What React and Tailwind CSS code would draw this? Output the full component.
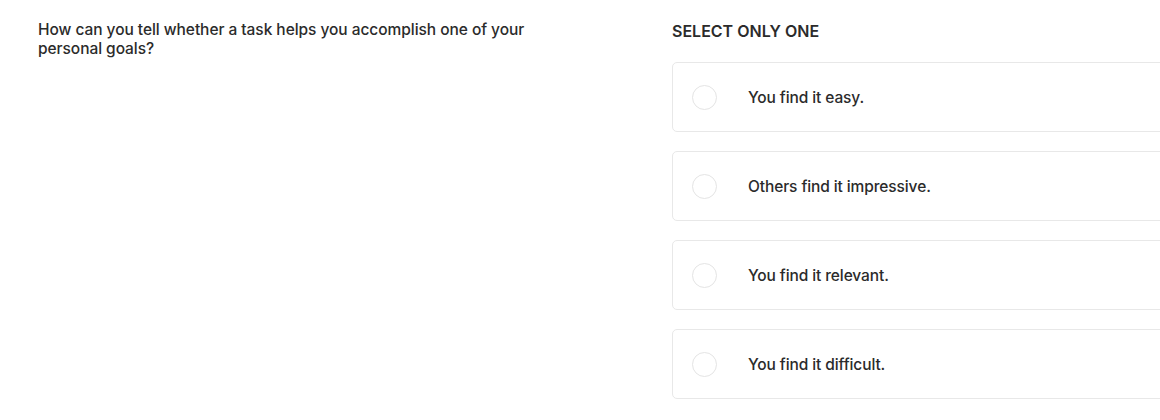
export default function App() {
  const options = [
    "You find it easy.",
    "Others find it impressive.",
    "You find it relevant.",
    "You find it difficult.",
  ];
  return (
    <div
      className="w-[1160px] h-[420px] overflow-hidden bg-white flex text-[#2b2b2b]"
      style={{ fontFamily: "Inter, 'Noto Sans', sans-serif" }}
    >
      <div className="w-[672px] shrink-0 pl-[38px] pt-[20px] pr-[124px]">
        <p className="text-[15.5px] leading-[19px] font-medium tracking-[-0.05px]">
          How can you tell whether a task helps you accomplish one of your personal goals?
        </p>
      </div>
      <div className="w-[560px] shrink-0 pt-[20px]">
        <div className="text-[16px] leading-[22px] font-semibold">SELECT ONLY ONE</div>
        <div className="mt-[20px] flex flex-col gap-[19px]">
          {options.map((o) => (
            <div
              key={o}
              className="h-[70px] border border-[#e8e8e8] rounded-[5px] flex items-center pl-[19px]"
            >
              <div className="w-[25px] h-[25px] rounded-full border border-[#e4e4e4] shrink-0" />
              <span className="ml-[31px] pt-[1px] text-[15.5px] font-medium tracking-[-0.1px]">{o}</span>
            </div>
          ))}
        </div>
      </div>
    </div>
  );
}
